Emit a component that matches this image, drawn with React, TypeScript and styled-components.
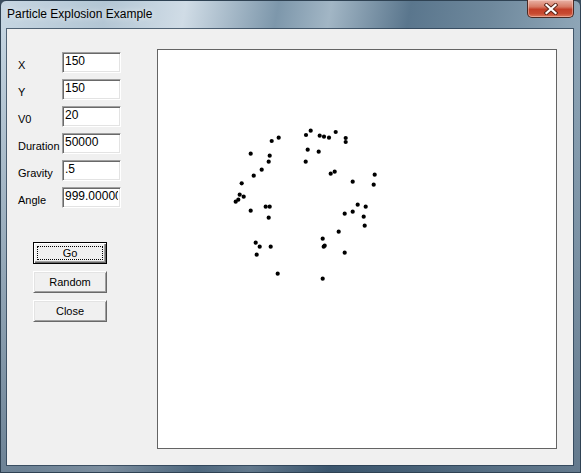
import { Fragment } from "react";
import styled, { createGlobalStyle } from "styled-components";

const GlobalStyle = createGlobalStyle`
    html, body {
        margin: 0;
        padding: 0;
        background: #3b4e5f;
    }
`;

const Window = styled.div`
    box-sizing: border-box;
    width: 581px;
    height: 473px;
    display: flex;
    flex-direction: column;
    padding: 0 7px 7px 6px;
    border: 1px solid #2f4253;
    border-radius: 6px 6px 0 0;
    background:
        linear-gradient(180deg, rgba(0, 0, 0, 0) 0, rgba(0, 0, 0, 0) 28px, rgba(20, 45, 70, 0.45) 100%),
        linear-gradient(100deg, #c6d6e2 0%, #b3c6d4 16%, #d0dce6 28%, #7d97ab 42%, #a2b6c5 50%, #5a768d 62%, #6e889c 74%, #8aa2b4 86%, #a6b9c8 100%);
`;

const TitleBar = styled.div`
    height: 28px;
    display: flex;
    align-items: flex-start;
    justify-content: space-between;
    flex-shrink: 0;
`;

const Title = styled.span`
    margin-top: 6px;
    font-family: "Liberation Sans", Arial, sans-serif;
    font-size: 12px;
    color: #000;
    text-shadow: 0 0 6px rgba(255, 255, 255, 0.9);
`;

const CloseButton = styled.div`
    box-sizing: border-box;
    width: 47px;
    height: 18px;
    margin-top: -1px;
    margin-right: -1px;
    display: flex;
    align-items: center;
    justify-content: center;
    border: 1px solid #4a2a24;
    border-top: none;
    border-radius: 0 0 5px 5px;
    background: linear-gradient(180deg, #e9b3a6 0%, #d77a65 40%, #c33f28 55%, #c84a31 80%, #dc7a5e 100%);
    box-shadow: inset 0 0 0 1px rgba(255, 220, 210, 0.45);
`;

const Client = styled.div`
    flex: 1;
    display: flex;
    background: #f0f0f0;
    box-shadow: 0 0 0 1px rgba(40, 60, 80, 0.75);
    font-family: "Liberation Sans", Arial, sans-serif;
    font-size: 11px;
    color: #000;
`;

const ControlPanel = styled.div`
    width: 150px;
    display: flex;
    flex-direction: column;
    padding-top: 23px;
`;

const Form = styled.div`
    display: grid;
    grid-template-columns: 44px 59px;
    row-gap: 6px;
    padding-left: 11px;
    align-items: center;
`;

const Label = styled.label`
    padding-top: 4px;
    white-space: nowrap;
`;

const Field = styled.input`
    box-sizing: border-box;
    width: 59px;
    height: 21px;
    padding: 0 2px 3px 2px;
    margin: 0;
    border: 1px solid;
    border-color: #a0a0a0 #ffffff #ffffff #a0a0a0;
    box-shadow: inset 1px 1px 0 #696969, inset -1px -1px 0 #e3e3e3;
    background: #fff;
    font-family: "Liberation Sans", Arial, sans-serif;
    font-size: 12px;
    color: #000;
    outline: none;
`;

const Buttons = styled.div`
    display: flex;
    flex-direction: column;
    gap: 7px;
    margin-top: 34px;
    padding-left: 26px;
`;

const Button = styled.button<{ $default?: boolean }>`
    box-sizing: border-box;
    width: 74px;
    height: 22px;
    padding: 3px;
    margin: 0;
    display: flex;
    background: #f0f0f0;
    font-family: "Liberation Sans", Arial, sans-serif;
    font-size: 11px;
    color: #000;
    border: 1px solid;
    border-color: ${(props) => (props.$default ? "#000" : "#fff #696969 #696969 #fff")};
    box-shadow: ${(props) =>
        props.$default
            ? "inset 1px 1px 0 #fff, inset -1px -1px 0 #696969, inset -2px -2px 0 #a0a0a0"
            : "inset 1px 1px 0 #e3e3e3, inset -1px -1px 0 #a0a0a0"};
`;

const ButtonLabel = styled.span<{ $focused?: boolean }>`
    flex: 1;
    display: flex;
    align-items: center;
    justify-content: center;
    color: #000;
    border: 1px dotted ${(props) => (props.$focused ? "#000" : "transparent")};
`;

const CanvasArea = styled.div`
    display: flex;
    padding-top: 20px;
`;

const Canvas = styled.div`
    box-sizing: border-box;
    width: 400px;
    height: 400px;
    border: 1px solid #646464;
    background: #fff;
`;

const particles: [number, number][] = [
    [153.7, 81.7], [149, 86], [162.7, 86.7], [167, 87.7], [172, 88.7], [178.7, 83],
    [188.7, 89], [188.7, 93], [121.7, 88.7], [114.7, 92], [93.7, 104.7], [112.7, 106.7],
    [111.7, 112.7], [104.7, 120.7], [96.7, 126.7], [150.7, 100.7], [161.7, 102.7],
    [148.7, 112.7], [173.7, 124.7], [177.7, 122.7], [217.7, 125.7], [216.7, 135.7],
    [195.7, 132.7], [84.7, 134.3], [82.7, 145.7], [86.7, 147.7], [81.3, 150.7],
    [78.7, 152.7], [93.7, 161.7], [108.7, 157.7], [112.7, 157.7], [111.7, 168.7],
    [200.7, 155.7], [208.7, 157.7], [195.7, 162.7], [187.7, 164.7], [206.7, 167.7],
    [207.7, 176.7], [181.7, 182.7], [165.7, 189.7], [167.7, 196.7], [166.7, 197.7],
    [187.7, 203.7], [98.7, 193.7], [102.7, 197.7], [113.7, 197.7], [99.7, 205.7],
    [120.7, 224.7], [165.7, 229.7],
];

const fields = [
    { label: "X", value: "150" },
    { label: "Y", value: "150" },
    { label: "V0", value: "20" },
    { label: "Duration", value: "50000" },
    { label: "Gravity", value: ".5" },
    { label: "Angle", value: "999.000000" },
];

function App() {
    return (
        <>
            <GlobalStyle />
            <Window>
                <TitleBar>
                    <Title>Particle Explosion Example</Title>
                    <CloseButton>
                        <svg width="14" height="12" viewBox="0 0 14 12">
                            <path d="M2.5 2 L11.5 10 M11.5 2 L2.5 10" stroke="#5a2418" strokeWidth="4" strokeLinecap="square" />
                            <path d="M2.5 2 L11.5 10 M11.5 2 L2.5 10" stroke="#fff" strokeWidth="2.2" strokeLinecap="square" />
                        </svg>
                    </CloseButton>
                </TitleBar>
                <Client>
                    <ControlPanel>
                        <Form>
                            {fields.map((f) => (
                                <Fragment key={f.label}>
                                    <Label>{f.label}</Label>
                                    <Field defaultValue={f.value} />
                                </Fragment>
                            ))}
                        </Form>
                        <Buttons>
                            <Button $default>
                                <ButtonLabel $focused>Go</ButtonLabel>
                            </Button>
                            <Button>
                                <ButtonLabel>Random</ButtonLabel>
                            </Button>
                            <Button>
                                <ButtonLabel>Close</ButtonLabel>
                            </Button>
                        </Buttons>
                    </ControlPanel>
                    <CanvasArea>
                        <Canvas>
                            <svg width="398" height="398" viewBox="1 1 398 398">
                                {particles.map(([x, y], i) => (
                                    <circle key={i} cx={x} cy={y} r="2.1" fill="#000" />
                                ))}
                            </svg>
                        </Canvas>
                    </CanvasArea>
                </Client>
            </Window>
        </>
    );
}

export default App;
